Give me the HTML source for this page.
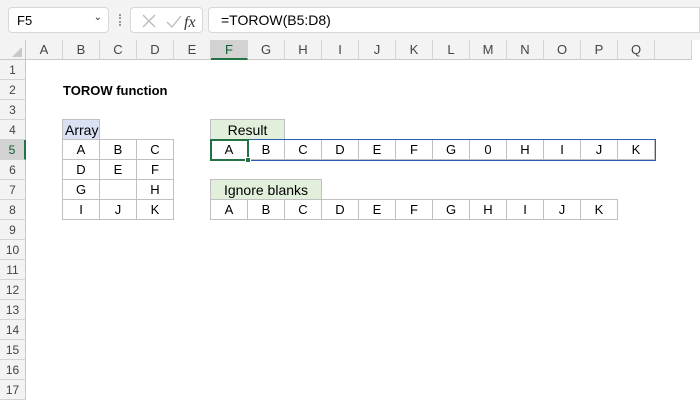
<!DOCTYPE html><html><head><style>
body{margin:0;width:700px;height:400px;overflow:hidden;background:#fff;font-family:"Liberation Sans",Calibri,sans-serif;position:relative}
.a{position:absolute;box-sizing:border-box}
.t{font-size:13px;display:flex;align-items:center;justify-content:center;color:#000}
.ch{top:40px;height:20px;color:#444;font-size:13px;background:#f3f3f3;border-right:1px solid #d4d4d4;border-bottom:1px solid #c8c8c8}
.rh{left:0;width:26px;height:20px;color:#444;font-size:12px;background:#f3f3f3;border-bottom:1px solid #d4d4d4;border-right:1px solid #c8c8c8}
</style></head><body>
<div class="a" style="left:0;top:0;width:700px;height:40px;background:#f3f3f3"></div>
<div class="a t" style="left:8px;top:7px;width:101px;height:26px;background:#fff;border:1px solid #d8d8d8;border-radius:4px;justify-content:flex-start;padding-left:8px;font-size:13px">F5<span style="position:absolute;right:6px;top:4px;font-size:10px;color:#333">&#8964;</span></div>
<div class="a" style="left:119px;top:14px;width:2px;height:12px;border-left:2px dotted #999"></div>
<div class="a" style="left:130px;top:7px;width:73px;height:26px;background:#fff;border:1px solid #d8d8d8;border-radius:4px"></div>
<svg class="a" style="left:135px;top:12px" width="70" height="18"><path d="M8 3l12 12M20 3L8 15" stroke="#bbb" stroke-width="1.3"/><path d="M32 10l5 5 9-11" stroke="#bbb" stroke-width="1.3" fill="none"/><text x="49" y="15" font-family="Liberation Serif" font-style="italic" font-size="16" fill="#333">fx</text></svg>
<div class="a t" style="left:208px;top:7px;width:492px;height:26px;background:#fff;border:1px solid #d8d8d8;border-radius:4px 0 0 4px;justify-content:flex-start;padding-left:12px;font-size:14px">=TOROW(B5:D8)</div>
<div class="a" style="left:0;top:40px;width:26px;height:20px;background:#f3f3f3;border-right:1px solid #c8c8c8;border-bottom:1px solid #c8c8c8"></div>
<svg class="a" style="left:10px;top:45px" width="14" height="14"><path d="M12 2V12H2Z" fill="#c8c8c8"/></svg>
<div id="g"></div>
<script>
var h='',L='ABCDEFGHIJKLMNOPQR';
for(var i=0;i<18;i++){var x=26+37*i;var s=i==5?'background:#d2d2d2;border-bottom:2px solid #217346;color:#0e5c2f;':'';h+='<div class="a t ch" style="left:'+x+'px;width:37px;'+s+'">'+(i<17?L[i]:'')+'</div>';}
for(var r=1;r<=17;r++){var y=40+20*r;var s=r==5?'background:#d2d2d2;border-right:2px solid #217346;color:#0e5c2f;':'';h+='<div class="a t rh" style="top:'+y+'px;'+s+'">'+r+'</div>';}
function cx(c){return 26+37*c-1}function ry(r){return 40+20*r-1}
function cell(c,r,t,w,st){h+='<div class="a t" style="left:'+cx(c)+'px;top:'+ry(r)+'px;width:'+(w||38)+'px;height:21px;background:#fff;border:1px solid #c0c0c0;'+(st||'')+'">'+t+'</div>';}
h+='<div class="a t" style="left:63px;top:80px;height:20px;font-weight:bold;font-size:13px">TOROW function</div>';
cell(1,4,'Array',38,'background:#d9e1f2;justify-content:flex-start;padding-left:2px;font-size:14px');
var arr=[['A','B','C'],['D','E','F'],['G','','H'],['I','J','K']];
for(var r=0;r<4;r++)for(var c=0;c<3;c++)cell(1+c,5+r,arr[r][c]);
cell(5,4,'Result',75,'background:#e2efda;font-size:14px');
var res='ABCDEFG0HIJK';for(var c=0;c<12;c++)cell(5+c,5,res[c]);
h+='<div class="a" style="left:210px;top:139px;width:446px;height:22px;border:1px solid #2f5fb3"></div>';
h+='<div class="a" style="left:210px;top:139px;width:39px;height:22px;border:2px solid #217346"></div>';
h+='<div class="a" style="left:245px;top:157px;width:6px;height:6px;background:#217346;border:1px solid #fff"></div>';
cell(5,7,'Ignore blanks',112,'background:#e2efda;font-size:14px');
var ig='ABCDEFGHIJK';for(var c=0;c<11;c++)cell(5+c,8,ig[c]);
document.getElementById('g').innerHTML=h;
</script>
</body></html>
